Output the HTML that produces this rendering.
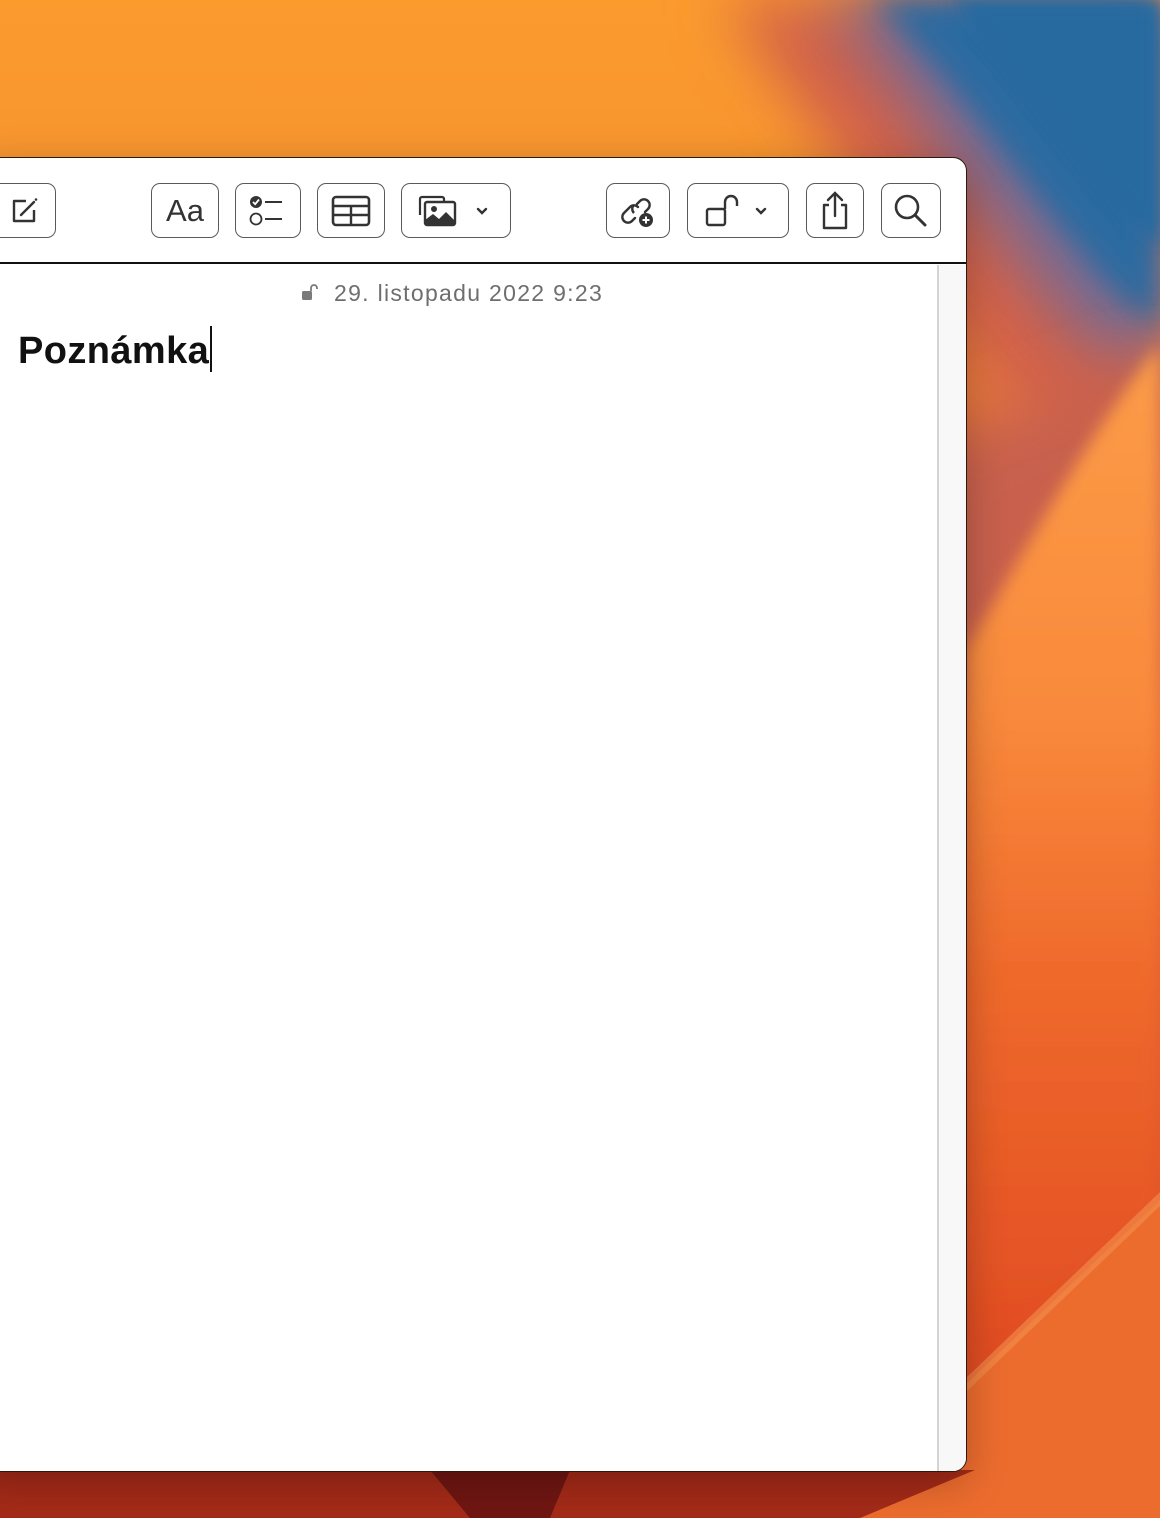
<!DOCTYPE html>
<html><head><meta charset="utf-8"><style>
*{margin:0;padding:0;box-sizing:border-box}
html,body{width:1160px;height:1518px;overflow:hidden}
body{position:relative;font-family:"Liberation Sans",sans-serif;background:#f59234}
.bgsvg{position:absolute;left:0;top:0}
.win{position:absolute;left:-21px;top:157px;width:988px;height:1315px;background:#fff;border:1.5px solid #2a1a10;border-radius:14px;overflow:hidden;box-shadow:0 10px 40px rgba(0,0,0,.25)}
.tb{position:absolute;left:0;top:0;width:100%;height:106px;border-bottom:2px solid #111}
.btn{position:absolute;top:25px;height:55px;border:1.5px solid #5a5a5a;border-radius:9px;display:flex;align-items:center;justify-content:center}
.btn svg{display:block}
.sb{position:absolute;left:957px;top:107px;width:30px;bottom:0;background:#f8f8f8;border-left:2px solid #d4d4d4}
.date{position:absolute;left:354px;top:122px;font-size:23px;color:#6e6e6e;letter-spacing:1.3px}
.title{position:absolute;left:38px;top:168px;font-size:38px;font-weight:bold;color:#111;letter-spacing:.4px}
.cur{display:inline-block;width:2px;height:46px;background:#111;vertical-align:-9px;margin-left:1px}
</style></head><body>
<svg class="bgsvg" width="1160" height="1518">
<defs>
<filter id="b30" x="-50%" y="-50%" width="200%" height="200%"><feGaussianBlur stdDeviation="30"/></filter>
<filter id="b15" x="-50%" y="-50%" width="200%" height="200%"><feGaussianBlur stdDeviation="15"/></filter>
<filter id="b8" x="-50%" y="-50%" width="200%" height="200%"><feGaussianBlur stdDeviation="8"/></filter>
<linearGradient id="bg" x1="0" y1="0" x2="0" y2="1"><stop offset="0" stop-color="#fb9b2e"/><stop offset=".1" stop-color="#f8962f"/><stop offset=".3" stop-color="#ee7a3a"/><stop offset="1" stop-color="#d84422"/></linearGradient>
<linearGradient id="hill" x1="0" y1="0" x2="0" y2="1"><stop offset="0" stop-color="#fb9c48"/><stop offset=".35" stop-color="#f98a3c"/><stop offset=".6" stop-color="#ef6a2c"/><stop offset="1" stop-color="#e04a22"/></linearGradient>
</defs>
<rect width="1160" height="1518" fill="url(#bg)"/>
<path d="M720,0 C800,100 880,220 960,340 C1030,440 1100,470 1160,480 L1160,0 Z" fill="#d2604a" filter="url(#b30)"/>
<path d="M820,0 C900,80 960,190 1040,290 C1090,350 1130,380 1160,390 L1160,0 Z" fill="#7a6a90" filter="url(#b30)"/>
<path d="M870,0 C950,70 1010,170 1080,250 C1110,290 1140,320 1160,330 L1160,0 Z" fill="#2a6aa0" filter="url(#b15)"/>
<path d="M950,0 C1010,60 1070,150 1160,250 L1160,0 Z" fill="#256aa0" filter="url(#b8)"/>
<path d="M900,480 C950,430 1000,400 1040,400 L1160,350 L1160,700 L900,700 Z" fill="#c8604e" filter="url(#b30)"/>
<path d="M966,650 C1020,560 1090,430 1160,345 L1160,1210 L966,1390 Z" fill="url(#hill)" filter="url(#b8)"/>
<path d="M960,1390 L1160,1200 L1160,1518 L860,1518 Z" fill="#ec6c2e"/>
<path d="M966,1378 L1160,1192 L1160,1206 L966,1392 Z" fill="#f3904c" opacity=".6"/>
<polygon points="0,1470 975,1470 860,1518 0,1518" fill="#a42a18"/>
<polygon points="430,1470 570,1470 550,1518 470,1518" fill="#701612"/>
</svg>
<div class="win">
<div class="tb">
 <div class="btn" style="left:-10px;width:86px"><svg width="40" height="40" viewBox="0 0 40 40" style="margin-left:24px"><path d="M21 10H9v20h20V19" fill="none" stroke="#333" stroke-width="2.4" stroke-linejoin="round"/><path d="M16 24l13-13" stroke="#333" stroke-width="2.4" stroke-linecap="round"/><circle cx="31" cy="8.5" r="1.3" fill="#333"/></svg></div>
 <div class="btn" style="left:171px;width:68px"><span style="font-size:31px;color:#333">Aa</span></div>
 <div class="btn" style="left:255px;width:66px"><svg width="40" height="34" viewBox="0 0 40 34"><circle cx="8" cy="8" r="6" fill="#333"/><path d="M5 8l2.2 2.2L11 5.5" stroke="#fff" stroke-width="1.8" fill="none"/><circle cx="8" cy="25" r="5.5" fill="none" stroke="#333" stroke-width="1.8"/><path d="M17 8h17M17 25h17" stroke="#333" stroke-width="2"/></svg></div>
 <div class="btn" style="left:337px;width:68px"><svg width="40" height="32" viewBox="0 0 40 32"><rect x="2" y="2" width="36" height="28" rx="3" fill="none" stroke="#333" stroke-width="2.6"/><path d="M2 11h36M2 20h36M20 11v19" stroke="#333" stroke-width="2.4"/></svg></div>
 <div class="btn" style="left:421px;width:110px"><svg width="80" height="36" viewBox="0 0 80 36"><path d="M4 22V6a2 2 0 0 1 2-2h20a2 2 0 0 1 2 2v2" fill="none" stroke="#333" stroke-width="2.2"/><rect x="9" y="9" width="30" height="23" rx="2" fill="none" stroke="#333" stroke-width="2.4"/><circle cx="18" cy="16" r="3" fill="#333"/><path d="M9 32V27l8-6 6 5 7-7 9 9v4z" fill="#333"/><path d="M62 16l4 4 4-4" stroke="#333" stroke-width="2.4" fill="none" stroke-linecap="round"/></svg></div>
 <div class="btn" style="left:626px;width:64px"><svg width="40" height="40" viewBox="0 0 40 40"><path d="M17 27l-3 3a5.5 5.5 0 0 1-8-8l6-6a5.5 5.5 0 0 1 8 0M19 13l3-3a5.5 5.5 0 0 1 8 8l-3 3" fill="none" stroke="#333" stroke-width="2.4" stroke-linecap="round"/><path d="M16 22a5.5 5.5 0 0 1 0-8" fill="none" stroke="#333" stroke-width="2.4"/><circle cx="28" cy="29" r="7" fill="#333"/><path d="M28 25.5v7M24.5 29h7" stroke="#fff" stroke-width="2"/></svg></div>
 <div class="btn" style="left:707px;width:102px"><svg width="70" height="40" viewBox="0 0 70 40"><rect x="4" y="18" width="18" height="16" rx="2" fill="none" stroke="#333" stroke-width="2.4"/><path d="M22 18v-7a6 6 0 0 1 12 0v4" fill="none" stroke="#333" stroke-width="2.4"/><path d="M54 18l4 4 4-4" stroke="#333" stroke-width="2.4" fill="none" stroke-linecap="round"/></svg></div>
 <div class="btn" style="left:826px;width:58px"><svg width="34" height="42" viewBox="0 0 34 42"><path d="M11 15H6v23h22V15h-5" fill="none" stroke="#333" stroke-width="2.4" stroke-linejoin="round"/><path d="M17 26V3M10 10l7-7 7 7" fill="none" stroke="#333" stroke-width="2.4" stroke-linecap="round"/></svg></div>
 <div class="btn" style="left:901px;width:60px"><svg width="36" height="36" viewBox="0 0 36 36"><circle cx="14" cy="14" r="11" fill="none" stroke="#333" stroke-width="2.6"/><path d="M22 22l10 10" stroke="#333" stroke-width="3" stroke-linecap="round"/></svg></div>
</div>
<div class="sb"></div>
<div class="date"><svg width="20" height="18" viewBox="0 0 20 18" style="position:absolute;left:-33px;top:3px"><rect x="1" y="8" width="10" height="9" rx="1.5" fill="#7a7a7a"/><path d="M10 8V5a3 3 0 0 1 6 0v1" fill="none" stroke="#7a7a7a" stroke-width="1.8"/></svg>29. listopadu 2022 9:23</div>
<div class="title">Poznámka<span class="cur"></span></div>
</div>
</body></html>
